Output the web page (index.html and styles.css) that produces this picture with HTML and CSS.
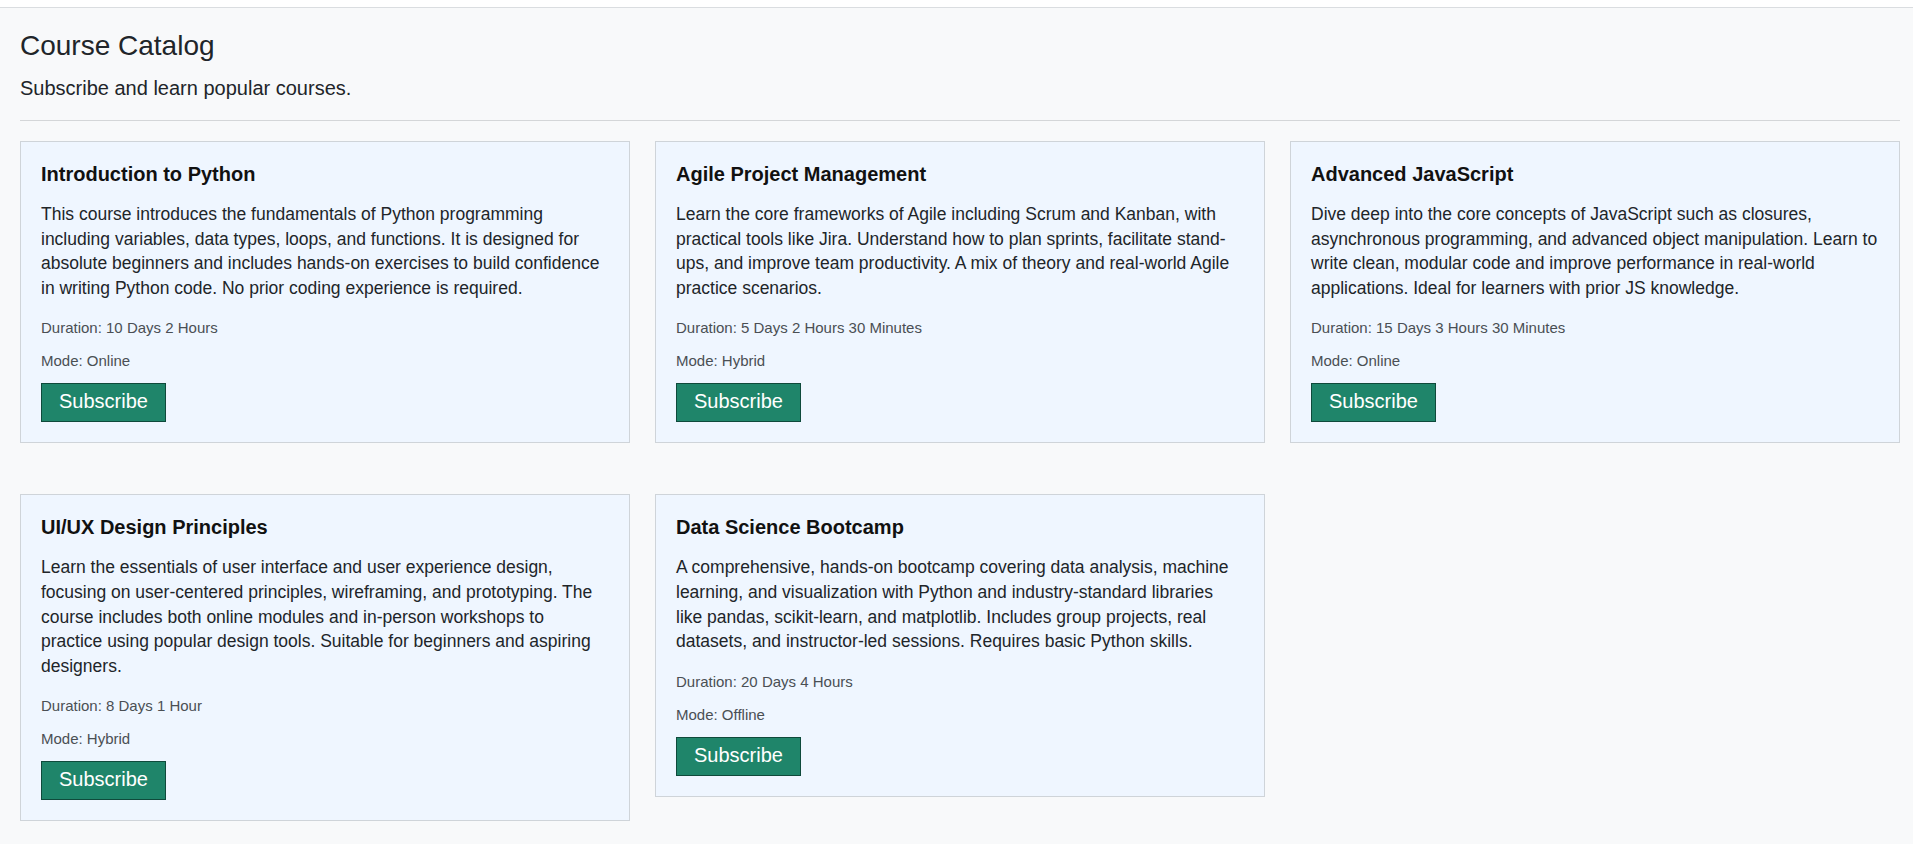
FILE: index.html
```html
<!DOCTYPE html>
<html lang="en">
<head>
<meta charset="utf-8">
<title>Course Catalog</title>
<link rel="stylesheet" href="styles.css">
</head>
<body>
<div class="topbar"></div>
<main class="page">
  <h1 class="page-title">Course Catalog</h1>
  <p class="page-sub">Subscribe and learn popular courses.</p>
  <hr class="divider">
  <section class="grid">
    <article class="card">
      <h3 class="card-title">Introduction to Python</h3>
      <p class="card-desc">This course introduces the fundamentals of Python programming including variables, data types, loops, and functions. It is designed for absolute beginners and includes hands-on exercises to build confidence in writing Python code. No prior coding experience is required.</p>
      <p class="card-meta">Duration: 10 Days 2 Hours</p>
      <p class="card-meta">Mode: Online</p>
      <button class="btn">Subscribe</button>
    </article>
    <article class="card">
      <h3 class="card-title">Agile Project Management</h3>
      <p class="card-desc">Learn the core frameworks of Agile including Scrum and Kanban, with practical tools like Jira. Understand how to plan sprints, facilitate stand-ups, and improve team productivity. A mix of theory and real-world Agile practice scenarios.</p>
      <p class="card-meta">Duration: 5 Days 2 Hours 30 Minutes</p>
      <p class="card-meta">Mode: Hybrid</p>
      <button class="btn">Subscribe</button>
    </article>
    <article class="card">
      <h3 class="card-title">Advanced JavaScript</h3>
      <p class="card-desc">Dive deep into the core concepts of JavaScript such as closures, asynchronous programming, and advanced object manipulation. Learn to write clean, modular code and improve performance in real-world applications. Ideal for learners with prior JS knowledge.</p>
      <p class="card-meta">Duration: 15 Days 3 Hours 30 Minutes</p>
      <p class="card-meta">Mode: Online</p>
      <button class="btn">Subscribe</button>
    </article>
    <article class="card">
      <h3 class="card-title">UI/UX Design Principles</h3>
      <p class="card-desc">Learn the essentials of user interface and user experience design, focusing on user-centered principles, wireframing, and prototyping. The course includes both online modules and in-person workshops to practice using popular design tools. Suitable for beginners and aspiring designers.</p>
      <p class="card-meta">Duration: 8 Days 1 Hour</p>
      <p class="card-meta">Mode: Hybrid</p>
      <button class="btn">Subscribe</button>
    </article>
    <article class="card">
      <h3 class="card-title">Data Science Bootcamp</h3>
      <p class="card-desc">A comprehensive, hands-on bootcamp covering data analysis, machine learning, and visualization with Python and industry-standard libraries like pandas, scikit-learn, and matplotlib. Includes group projects, real datasets, and instructor-led sessions. Requires basic Python skills.</p>
      <p class="card-meta">Duration: 20 Days 4 Hours</p>
      <p class="card-meta">Mode: Offline</p>
      <button class="btn">Subscribe</button>
    </article>
  </section>
</main>
</body>
</html>
```

FILE: styles.css
```css
* { box-sizing: border-box; }

html, body {
  margin: 0;
  padding: 0;
}

body {
  background: #f8f9fa;
  font-family: "Liberation Sans", Arial, sans-serif;
  color: #212529;
}

.topbar {
  height: 8px;
  background: #ffffff;
  border-bottom: 1px solid #dadde0;
}

.page {
  padding: 21px 13px 0 20px;
}

.page-title {
  margin: 0;
  font-size: 28px;
  line-height: 34px;
  font-weight: 400;
  color: #212529;
}

.page-sub {
  margin: 10px 0 0;
  font-size: 20px;
  line-height: 30px;
  color: #212529;
}

.divider {
  margin: 17px 0 20px;
  border: 0;
  border-top: 1px solid #d4d6d8;
  height: 0;
}

.grid {
  display: grid;
  grid-template-columns: repeat(3, 1fr);
  column-gap: 25px;
  row-gap: 51px;
  align-items: start;
}

.card {
  background: #eff6ff;
  border: 1px solid #cfd4d9;
  padding: 20px;
}

.card-title {
  margin: 0 0 16px;
  font-size: 20px;
  line-height: 24px;
  font-weight: 700;
  color: #111111;
}

.card-desc {
  margin: 0 0 17px;
  font-size: 17.5px;
  line-height: 24.6px;
  color: #212529;
}

.card-meta {
  margin: 0 0 10.5px;
  font-size: 15px;
  line-height: 22.5px;
  color: #4a4f54;
}

.btn {
  display: inline-block;
  margin: 0;
  font-family: "Liberation Sans", Arial, sans-serif;
  font-size: 20px;
  line-height: 23px;
  padding: 6px 17px 8px;
  color: #ffffff;
  background: #1f856a;
  border: 1px solid #0f4a3b;
  border-radius: 0;
  cursor: pointer;
}
```
